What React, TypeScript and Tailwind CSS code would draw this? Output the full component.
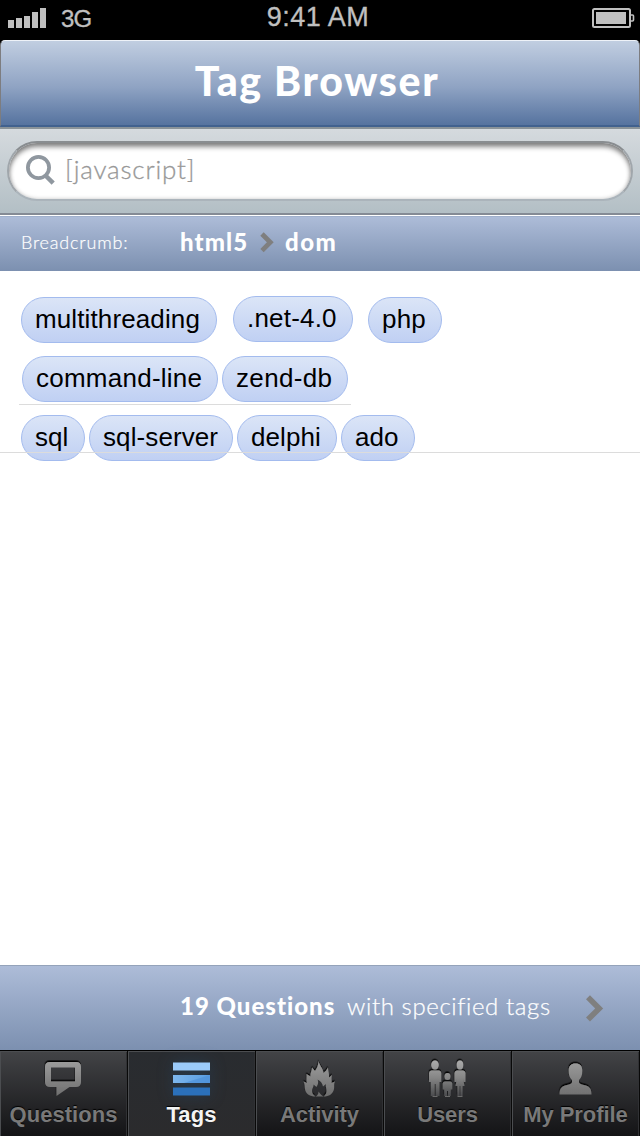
import type { ReactNode } from "react";

const lato = "font-['Lato','Open_Sans',sans-serif]";
const pillBase =
  "box-border flex h-[46px] shrink-0 items-center whitespace-nowrap rounded-full border border-[#a3bbee] bg-linear-to-b from-[#dbe5f7] to-[#c0d0f3] pb-[2px] pl-[13px] text-[26px] leading-[42px] text-black";

function Pill({ children, className }: { children: ReactNode; className: string }) {
  return <span className={`${pillBase} ${className}`}>{children}</span>;
}

function Battery() {
  return (
    <svg width="44" height="22" viewBox="0 0 44 22" fill="none">
      <rect x="1" y="2" width="37" height="18" rx="1.5" stroke="#c0c0c0" strokeWidth="2" />
      <rect x="4" y="5" width="30" height="12" fill="#c0c0c0" />
      <path d="M38 8h2.5q1 0 1 1v4q0 1-1 1H38" stroke="#c0c0c0" strokeWidth="1.6" />
    </svg>
  );
}

function Chevron({ size }: { size: "small" | "large" }) {
  return size === "small" ? (
    <svg width="14" height="21" viewBox="0 0 14 21" fill="none">
      <path d="M2 2l8.3 8.3L2 18.600" stroke="#7f7f7f" strokeWidth="4.800" />
    </svg>
  ) : (
    <svg width="18" height="27" viewBox="0 0 18 27" fill="none">
      <path d="M2 2.200L13.200 13.400L2 24.600" stroke="#7f7f7f" strokeWidth="5.600" />
    </svg>
  );
}

function Defs() {
  return (
    <defs>
      <linearGradient id="metal" x1="0" y1="0" x2="0" y2="40" gradientUnits="userSpaceOnUse">
        <stop offset="0" stopColor="#a0a0a0" />
        <stop offset="1" stopColor="#6c6c6c" />
      </linearGradient>
      <linearGradient id="figure" x1="0" y1="0" x2="0" y2="40" gradientUnits="userSpaceOnUse">
        <stop offset="0" stopColor="#b0b0b0" />
        <stop offset="0.5" stopColor="#858585" />
        <stop offset="1" stopColor="#444547" />
      </linearGradient>
      <filter id="inset" x="-20%" y="-20%" width="140%" height="140%">
        <feDropShadow dx="-0.3" dy="-1.6" stdDeviation="0.5" floodColor="#000" floodOpacity="1" />
      </filter>
    </defs>
  );
}

function QuestionsIcon() {
  return (
    <svg width="40" height="40" viewBox="0 0 40 40">
      <Defs />
      <path
        fill="url(#metal)"
        fillRule="evenodd"
        filter="url(#inset)"
        d="M6 4h26q5 0 5 5v15q0 5-5 5h-6.500l-13 9v-9H6q-5 0-5-5V9q0-5 5-5zM7 9.500v14h24v-14z"
      />
    </svg>
  );
}

function TagsIcon() {
  return (
    <svg width="40" height="40" viewBox="0 0 40 40">
      <defs>
        <linearGradient id="blue" x1="0" y1="0" x2="37" y2="8" gradientUnits="userSpaceOnUse">
          <stop offset="0" stopColor="#83bbf0" />
          <stop offset="1" stopColor="#5c9fe2" />
        </linearGradient>
      </defs>
      <rect x="1" y="4.500" width="37" height="8" fill="#9bcbfa" />
      <rect x="1" y="17" width="37" height="8" fill="url(#blue)" />
      <path d="M12 25l26-8v8z" fill="#4f92d8" opacity="0.7" />
      <rect x="1" y="29.500" width="37" height="8" fill="#2b70ba" />
    </svg>
  );
}

function ActivityIcon() {
  return (
    <svg width="40" height="40" viewBox="0 0 40 40">
      <Defs />
      <path
        fill="url(#metal)"
        filter="url(#inset)"
        d="M18.500 3C19 7 23 10 23.500 15C25.500 13.500 26.500 12 28 9.500C28 13 29.500 16 29 19.500L32 17C31 20 32 22 31.500 25L35 23.500C33.500 26 34.500 28 34 31C33 36 29 38.500 23.500 38.500C25.500 37 27 35 26.500 32C26 29 25.500 28 26 26L23 28.500C22.500 25 20.500 23 17.500 21.500C19 25 17.500 27 16.500 29L13.500 26.500C14 28.500 12 30 12 33C12 35.500 13.500 37 15.500 38.500C10 38.500 6 36.500 5 31C4.500 28 5 26 3.500 23.500L7 25C6 22 7 19 6.500 16L10.500 18.500C10 15 12 13 12 9.500L15 13C17 10 18.500 7 18.500 3Z"
      />
      <path fill="#6f6f6f" d="M15.500 38.500c2-1 3-2.500 3-5 1.500 1.500 2 3.500 5 5z" />
    </svg>
  );
}

function UsersIcon() {
  return (
    <svg width="42" height="42" viewBox="0 0 42 42">
      <Defs />
      <g fill="url(#figure)" filter="url(#inset)">
        <ellipse cx="8" cy="7" rx="3.800" ry="4.500" />
        <path d="M4.500 12.500h7.500q2 0 2.300 2.500v9h-1.800v14H8.700V26h-1v12H3.800V24H2v-9q.3-2.500 2.500-2.500z" />
        <ellipse cx="33" cy="7" rx="3.300" ry="4.500" />
        <path d="M30 12.500h6q2.200 0 2.500 2.500v9h-1.700l-1-4 1.800 8h-2v10h-2.200V28h-.8v10h-2.200V28h-2l1.800-8-1 4h-1.700v-9q.3-2.500 2.500-2.500z" />
        <ellipse cx="20.500" cy="18.500" rx="3" ry="3.500" />
        <path d="M18 23.500h5q2 0 2.300 2v6h-1.500V38H21v-5h-1v5h-2.800v-6.500h-1.500v-6q.3-2 2.300-2z" />
      </g>
      <path d="M5.500 38.500h5M18 38.500h5M30.500 38.500h5" stroke="#6b6b6b" strokeWidth="1" />
    </svg>
  );
}

function ProfileIcon() {
  return (
    <svg width="40" height="40" viewBox="0 0 40 40">
      <Defs />
      <path
        fill="url(#metal)"
        filter="url(#inset)"
        d="M19.500 5.500c4.500 0 6.800 2.600 6.800 7 0 4.800-1 7.500-3.300 9.500v2c0 2 3 2.500 6 3.200 4 1 6.500 3 6.500 9.300h-32c0-6.300 2.500-8.300 6.500-9.300 3-.7 6-1.200 6-3.200v-2c-2.300-2-3.300-4.700-3.300-9.500 0-4.400 2.300-7 6.800-7z"
      />
    </svg>
  );
}

const tabs = [
  { label: "Questions", icon: <QuestionsIcon />, tracking: "tracking-[0.05px]" },
  { label: "Tags", icon: <TagsIcon />, tracking: "tracking-[0.1px]" },
  { label: "Activity", icon: <ActivityIcon />, tracking: "tracking-[-0.05px]" },
  { label: "Users", icon: <UsersIcon />, tracking: "tracking-[-0.1px]" },
  { label: "My Profile", icon: <ProfileIcon />, tracking: "tracking-[-0.05px]" },
];

export default function App() {
  return (
    <div className="flex h-[1136px] w-[640px] flex-col overflow-hidden bg-white font-['Liberation_Sans',Arial,sans-serif]">
      <header className="grid h-10 shrink-0 grid-cols-3 bg-black text-[#c0c0c0]">
        <div className="flex items-start pl-2">
          <div className="mt-2 flex h-5 items-end gap-[2px]">
            <i className="h-2 w-[6px] bg-[#c0c0c0]" />
            <i className="h-[10px] w-[6px] bg-[#c0c0c0]" />
            <i className="h-3 w-[6px] bg-[#c0c0c0]" />
            <i className="h-4 w-[6px] bg-[#c0c0c0]" />
            <i className="h-5 w-[6px] bg-[#c0c0c0]" />
          </div>
          <span className="ml-[15px] mt-[5px] text-[24px] leading-[28px] tracking-[-0.8px] [-webkit-text-stroke:0.3px_#c0c0c0]">3G</span>
        </div>
        <div className="whitespace-nowrap pr-[4px] pt-[2px] text-center text-[27px] leading-[30px] tracking-[0.5px] [-webkit-text-stroke:0.3px_#c0c0c0]">9:41 AM</div>
        <div className="flex justify-end pr-[4px] pt-[7px]">
          <Battery />
        </div>
      </header>

      <div className="h-[87px] shrink-0 bg-linear-to-b from-black from-50% to-[#7f8489] to-50%">
        <div className="flex h-full justify-center rounded-t-[5px] border-x border-x-[#7d7d80] border-b-2 border-b-[#41618e] border-t border-t-[#eef2f8] bg-linear-to-b from-[#c1cee1] via-[#8fa3c3] via-55% to-[#56739f]">
          <h1 className={`${lato} mt-[14px] whitespace-nowrap pr-[6px] text-[41px] font-black leading-[52px] tracking-[1.65px] text-white`}>Tag Browser</h1>
        </div>
      </div>

      <div className="flex h-[89px] shrink-0 flex-col border-b border-b-white">
        <div className="h-[88px] border-b-2 border-t-2 border-b-[#858b95] border-t-[#8a9399] bg-linear-to-b from-[#d5dade] to-[#b3bfc5] px-[7px] pt-[12px]">
          <div className="flex h-[60px] items-start rounded-full border-2 border-b-[#abb4bb] border-l-[#a0a6ab] border-r-[#a0a6ab] border-t-[#898d90] bg-white pl-[16px] shadow-[inset_0_4px_5px_rgba(0,0,0,0.45),inset_0_0_4px_rgba(0,0,0,0.2)]">
            <svg className="mt-[11px]" width="31" height="32" viewBox="0 0 31 32" fill="none" stroke="#8f979f">
              <circle cx="13.500" cy="13.500" r="10.600" strokeWidth="3.800" />
              <path d="M20.500 21.500l7.700 7.600" strokeWidth="4.500" />
            </svg>
            <span className={`${lato} ml-[9px] mt-[9px] whitespace-nowrap text-[26px] font-light leading-[34px] tracking-[0.8px] text-[#989898] [-webkit-text-stroke:0.3px_#989898]`}>[javascript]</span>
          </div>
        </div>
      </div>

      <nav className={`${lato} flex h-[55px] shrink-0 items-start border-t border-t-[#a0b0cc] bg-linear-to-b from-[#adbcd8] to-[#7c90b0] text-white`}>
        <span className="ml-[21px] mt-[13px] w-[159px] text-[18px] font-light leading-[24px] tracking-[0.8px] [-webkit-text-stroke:0.2px_#fff]">Breadcrumb:</span>
        <b className="mt-[9px] w-[80px] text-[24px] font-black leading-[32px] tracking-[1.1px]">html5</b>
        <span className="mt-[15px] w-[25px]"><Chevron size="small" /></span>
        <b className="mt-[9px] text-[24px] font-black leading-[32px] tracking-[1.5px]">dom</b>
      </nav>

      <main className="flex h-[694px] shrink-0 flex-col">
        <div className="relative h-[191px] pt-[25px]">
          <div className="flex h-[47px]">
            <Pill className="ml-[21px] mt-px w-[196px] tracking-[0.12px]">multithreading</Pill>
            <Pill className="ml-[16px] w-[120px] tracking-[0.2px]">.net-4.0</Pill>
            <Pill className="ml-[15px] mt-px w-[74px] tracking-[0.2px]">php</Pill>
          </div>
          <div className="ml-[19px] mt-[13px] flex h-[49px] w-[332px] gap-1 border-b border-b-[#dcdcdc] pl-[3px]">
            <Pill className="w-[196px] tracking-[0.25px]">command-line</Pill>
            <Pill className="w-[126px] tracking-[0.35px]">zend-db</Pill>
          </div>
          <div className="mt-[10px] flex gap-1 pl-[21px]">
            <Pill className="w-[64px]">sql</Pill>
            <Pill className="w-[144px] tracking-[0.1px]">sql-server</Pill>
            <Pill className="w-[100px] tracking-[0.1px]">delphi</Pill>
            <Pill className="w-[74px] tracking-[0.1px]">ado</Pill>
          </div>
          <div className="absolute inset-x-0 top-[181px] h-px bg-[#dcdcdc]" />
        </div>
      </main>

      <section className={`${lato} flex h-[85px] shrink-0 items-start border-t border-t-[#94a3ba] bg-linear-to-b from-[#adbcd8] to-[#7c90b0] text-[24px] leading-[32px] text-white`}>
        <b className="ml-[180px] mt-[24px] w-[167px] whitespace-nowrap font-black tracking-[1px]">19 Questions</b>
        <span className="mt-[24px] w-[239px] whitespace-nowrap font-light tracking-[0.6px] [-webkit-text-stroke:0.25px_#fff]">with specified tags</span>
        <span className="mt-[29px]"><Chevron size="large" /></span>
      </section>

      <footer className="grid h-[86px] shrink-0 grid-cols-5 border-t border-t-black bg-[#1d1e20]">
        {tabs.map(({ label, icon, tracking }) => {
          const active = label === "Tags";
          return (
            <div
              key={label}
              className={`flex flex-col items-center border-r border-r-[#090909] shadow-[inset_1px_1px_0_#4b4d50,inset_-1px_0_0_#303134] ${
                active ? "bg-linear-to-b from-[#292c30] to-[#2b2b2d]" : "bg-linear-to-b from-[#434447] to-[#141416]"
              }`}
            >
              <div className={`mt-[7px] h-[42px] ${active ? "drop-shadow-[0_0_8px_rgba(35,90,140,0.35)]" : ""}`}>{icon}</div>
              <span className={`mt-[2px] whitespace-nowrap text-[22px] font-bold leading-[26px] ${tracking} ${active ? "text-[#f4f4f4]" : "text-[#797979]"} [text-shadow:0_-1px_1px_#000]`}>
                {label}
              </span>
            </div>
          );
        })}
      </footer>
    </div>
  );
}
